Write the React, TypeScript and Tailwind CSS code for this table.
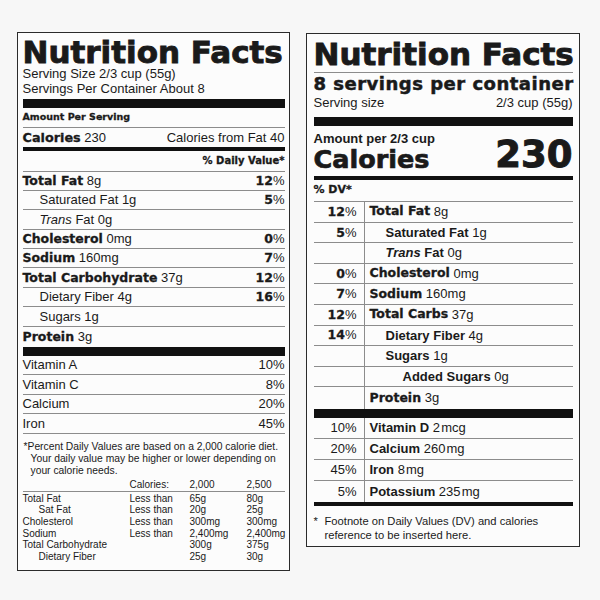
import React from 'react';

const H = "font-['DejaVu_Sans',sans-serif] font-bold [-webkit-text-stroke:0.3px_currentColor]";
const R = "font-['Liberation_Sans',Arial,sans-serif]";
const LINE = 'border-[#8c8c8c]';

const Pct = ({ n }: { n: string }) => (
	<span className="text-[13px]">
		<span className={`${H} text-[12.5px]`}>{n}</span>%
	</span>
);

const LeftRow = ({
	children,
	right,
	last = false,
}: {
	children: React.ReactNode;
	right?: React.ReactNode;
	last?: boolean;
}) => (
	<div
		className={`flex items-center justify-between text-[13px] ${
			last ? 'h-[20px]' : `h-[19.4px] border-b ${LINE}`
		}`}>
		<span className="whitespace-nowrap">{children}</span>
		{right}
	</div>
);

const RightRow = ({
	pct,
	children,
	last = false,
	h = 'h-[20.6px]',
}: {
	pct?: React.ReactNode;
	children: React.ReactNode;
	last?: boolean;
	h?: string;
}) => (
	<div className={`flex ${h} ${last ? '' : `border-b ${LINE}`}`}>
		<div className="flex w-[50px] items-center justify-end pr-[7px] text-[13px]">{pct}</div>
		<div className={`flex flex-1 items-center whitespace-nowrap border-l ${LINE} pl-[5px] text-[13px]`}>
			{children}
		</div>
	</div>
);

const tableRows = [
	['Total Fat', 'Less than', '65g', '80g', false],
	['Sat Fat', 'Less than', '20g', '25g', true],
	['Cholesterol', 'Less than', '300mg', '300mg', false],
	['Sodium', 'Less than', '2,400mg', '2,400mg', false],
	['Total Carbohydrate', '', '300g', '375g', false],
	['Dietary Fiber', '', '25g', '30g', true],
] as const;

const OldLabel = () => (
	<div className={`w-[273px] border-[1.5px] border-[#2b2b2b] bg-[#fcfcfc] px-[4.5px] pt-[4.5px] pb-[7px] ${R} text-[#1a1a1a]`}>
		<h1 className={`${H} whitespace-nowrap text-[31px] leading-[28px] [-webkit-text-stroke:0.9px_currentColor]`}>
			Nutrition Facts
		</h1>
		<p className="text-[13px] leading-[15px]">Serving Size 2/3 cup (55g)</p>
		<p className="text-[13px] leading-[15px]">Servings Per Container About 8</p>
		<div className="mt-[3px] h-[9px] bg-[#111]" />
		<div className={`flex h-[20px] items-center border-b ${LINE}`}>
			<span className={`${H} text-[9.5px]`}>Amount Per Serving</span>
		</div>
		<div className="flex h-[19.5px] items-center justify-between text-[13px]">
			<span>
				<span className={`${H} text-[12.8px]`}>Calories</span> 230
			</span>
			<span>Calories from Fat 40</span>
		</div>
		<div className="h-[4px] bg-[#111]" />
		<div className={`flex h-[20.5px] items-center justify-end border-b ${LINE}`}>
			<span className={`${H} text-[10px]`}>% Daily Value*</span>
		</div>

		<LeftRow right={<Pct n="12" />}>
			<span className={`${H} text-[12.5px]`}>Total Fat</span> 8g
		</LeftRow>
		<LeftRow right={<Pct n="5" />}>
			<span className="pl-[17px]">Saturated Fat 1g</span>
		</LeftRow>
		<LeftRow>
			<span className="pl-[17px]">
				<i>Trans</i> Fat 0g
			</span>
		</LeftRow>
		<LeftRow right={<Pct n="0" />}>
			<span className={`${H} text-[12.5px]`}>Cholesterol</span> 0mg
		</LeftRow>
		<LeftRow right={<Pct n="7" />}>
			<span className={`${H} text-[12.5px]`}>Sodium</span> 160mg
		</LeftRow>
		<LeftRow right={<Pct n="12" />}>
			<span className={`${H} text-[12.5px]`}>Total Carbohydrate</span> 37g
		</LeftRow>
		<LeftRow right={<Pct n="16" />}>
			<span className="pl-[17px]">Dietary Fiber 4g</span>
		</LeftRow>
		<LeftRow>
			<span className="pl-[17px]">Sugars 1g</span>
		</LeftRow>
		<LeftRow last>
			<span className={`${H} text-[12.5px]`}>Protein</span> 3g
		</LeftRow>
		<div className="h-[9px] bg-[#111]" />

		{[
			['Vitamin A', '10%'],
			['Vitamin C', '8%'],
			['Calcium', '20%'],
			['Iron', '45%'],
		].map(([name, pct]) => (
			<div key={name} className={`flex h-[19.5px] items-center justify-between border-b-[1.5px] ${LINE} text-[13px]`}>
				<span>{name}</span>
				<span>{pct}</span>
			</div>
		))}

		<div className="pt-[7px] pl-[8px] -indent-[7px] text-[10.3px] leading-[12px]">
			<p className="whitespace-nowrap">*Percent Daily Values are based on a 2,000 calorie diet.</p>
			<p className="indent-0 whitespace-nowrap">Your daily value may be higher or lower depending on</p>
			<p className="indent-0 whitespace-nowrap">your calorie needs.</p>
		</div>

		<div className={`mt-[2px] grid grid-cols-[107px_60px_57px_1fr] border-b ${LINE} text-[10px] leading-[12px]`}>
			<span />
			<span>Calories:</span>
			<span>2,000</span>
			<span>2,500</span>
		</div>
		<div className="grid grid-cols-[107px_60px_57px_1fr] pt-[1px] text-[10px] leading-[11.7px]">
			{tableRows.map(([name, lim, a, b, indent]) => (
				<React.Fragment key={name}>
					<span className={`whitespace-nowrap ${indent ? 'pl-[16px]' : ''}`}>{name}</span>
					<span>{lim}</span>
					<span>{a}</span>
					<span className="whitespace-nowrap">{b}</span>
				</React.Fragment>
			))}
		</div>
	</div>
);

const NewLabel = () => (
	<div className={`mt-[1px] w-[274px] border-[1.5px] border-[#2b2b2b] bg-[#fcfcfc] px-[6.5px] pt-[5.5px] pb-[4px] ${R} text-[#1a1a1a]`}>
		<h1 className={`${H} whitespace-nowrap text-[31px] leading-[28px] [-webkit-text-stroke:0.9px_currentColor]`}>
			Nutrition Facts
		</h1>
		<div className={`mt-[4px] border-t ${LINE}`} />
		<p className={`${H} mt-[1px] whitespace-nowrap text-[18px] leading-[20px] tracking-[0.5px] [-webkit-text-stroke:0.5px_currentColor]`}>
			8 servings per container
		</p>
		<div className="flex justify-between text-[13px] leading-[17px]">
			<span>Serving size</span>
			<span>2/3 cup (55g)</span>
		</div>
		<div className="mt-[6px] h-[9px] bg-[#111]" />
		<div className="flex items-end justify-between pt-[6px]">
			<div>
				<p className="text-[13px] font-bold leading-[14px]">Amount per 2/3 cup</p>
				<p className={`${H} text-[25.5px] leading-[26px] [-webkit-text-stroke:0.7px_currentColor]`}>Calories</p>
			</div>
			<span className={`${H} text-[37px] leading-[34px] [-webkit-text-stroke:1px_currentColor]`}>230</span>
		</div>
		<div className="mt-[4.5px] h-[4px] bg-[#111]" />
		<div className={`flex h-[22px] items-center border-b ${LINE}`}>
			<span className={`${H} text-[11px]`}>% DV*</span>
		</div>

		<RightRow pct={<Pct n="12" />}>
			<span className={`${H} text-[12.5px]`}>Total Fat</span>&nbsp;8g
		</RightRow>
		<RightRow pct={<Pct n="5" />}>
			<span className="pl-[16px] font-bold">Saturated Fat</span>&nbsp;1g
		</RightRow>
		<RightRow>
			<span className="pl-[16px] font-semibold">
				<i>Trans</i> Fat
			</span>
			&nbsp;0g
		</RightRow>
		<RightRow pct={<Pct n="0" />}>
			<span className={`${H} text-[12.5px]`}>Cholesterol</span>&nbsp;0mg
		</RightRow>
		<RightRow pct={<Pct n="7" />}>
			<span className={`${H} text-[12.5px]`}>Sodium</span>&nbsp;160mg
		</RightRow>
		<RightRow pct={<Pct n="12" />}>
			<span className={`${H} text-[12.5px]`}>Total Carbs</span>&nbsp;37g
		</RightRow>
		<RightRow pct={<Pct n="14" />}>
			<span className="pl-[16px] font-bold">Dietary Fiber</span>&nbsp;4g
		</RightRow>
		<RightRow>
			<span className="pl-[16px] font-bold">Sugars</span>&nbsp;1g
		</RightRow>
		<RightRow>
			<span className="pl-[33px] font-bold">Added Sugars</span>&nbsp;0g
		</RightRow>
		<RightRow last h="h-[21.6px]">
			<span className={`${H} text-[12.5px]`}>Protein</span>&nbsp;3g
		</RightRow>
		<div className="h-[9px] bg-[#111]" />

		<RightRow h="h-[21px]" pct="10%">
			<span className="font-bold">Vitamin D</span>&nbsp;2&#8202;mcg
		</RightRow>
		<RightRow h="h-[21px]" pct="20%">
			<span className="font-bold">Calcium</span>&nbsp;260&#8202;mg
		</RightRow>
		<RightRow h="h-[21px]" pct="45%">
			<span className="font-bold">Iron</span>&nbsp;8&#8202;mg
		</RightRow>
		<RightRow h="h-[21px]" pct="5%" last>
			<span className="font-bold">Potassium</span>&nbsp;235&#8202;mg
		</RightRow>
		<div className="h-[4px] bg-[#111]" />

		<div className="flex pt-[8px] text-[11.2px] leading-[14px]">
			<span className="w-[11px] shrink-0">*</span>
			<p>
				Footnote on Daily Values (DV) and calories
				<br />
				reference to be inserted here.
			</p>
		</div>
	</div>
);

export default function App() {
	return (
		<div className="flex min-h-[600px] w-[600px] items-start gap-[16px] bg-[#f7f7f7] pt-[32px] pl-[17px]">
			<OldLabel />
			<NewLabel />
		</div>
	);
}
